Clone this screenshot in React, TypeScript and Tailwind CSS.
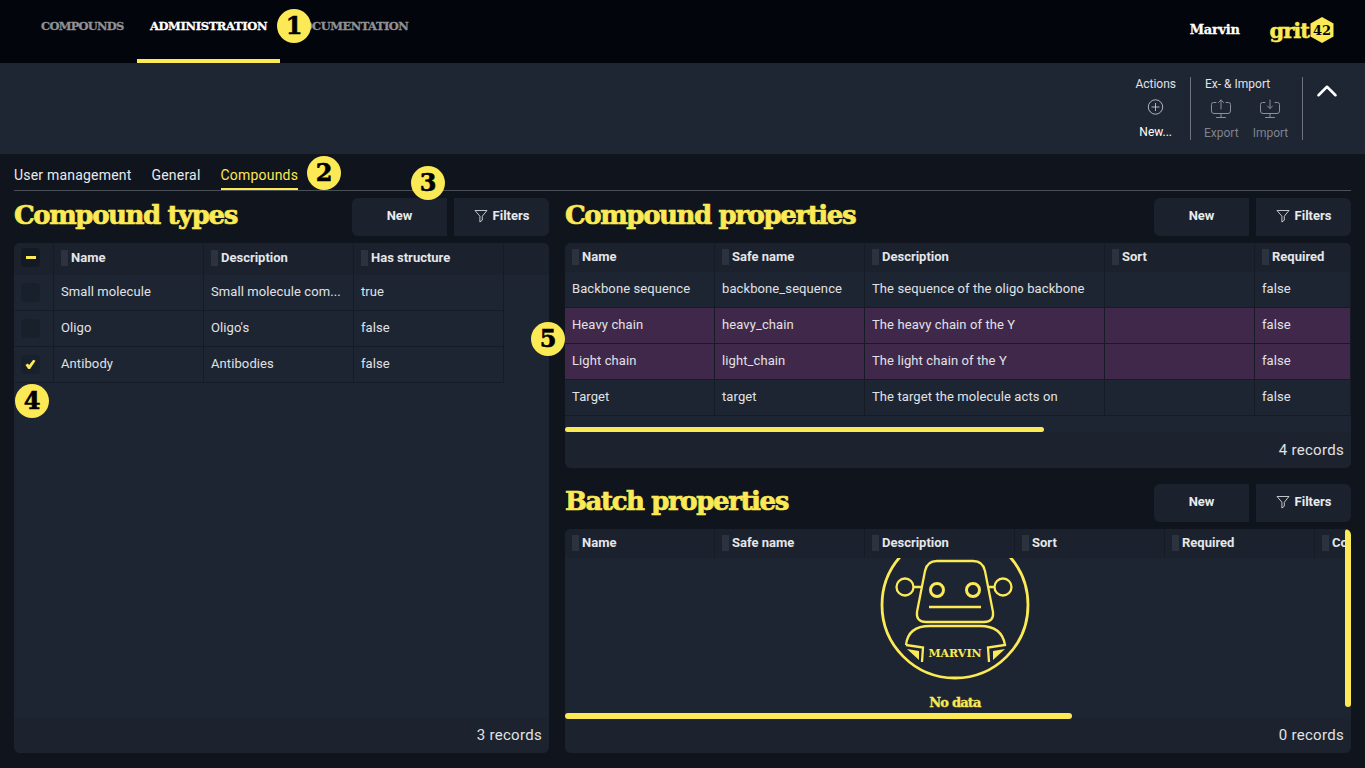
import { ChevronUp } from "lucide-react";

const yellow = "#fbe955";

type Col = { title: string; width: string };
type Row = { cells: string[]; highlighted?: boolean; check?: boolean };

function Badge({ n, className }: { n: number; className: string }) {
  return (
    <div
      className={`absolute flex h-[34px] w-[34px] items-center justify-center rounded-full bg-[#fbe955] font-['DejaVu_Serif',serif] text-[24px] font-bold text-black [-webkit-text-stroke-width:0.6px] ${className}`}
    >
      {n}
    </div>
  );
}

function FilterIcon() {
  return (
    <svg viewBox="0 0 14 14" className="h-[14px] w-[14px]" fill="none" stroke="#d5d8de" strokeWidth="0.9">
      <path d="M1 1.500h12L8.300 7.200v4L5.900 13V7.200z" strokeLinejoin="round" />
    </svg>
  );
}

function MonitorIcon({ up }: { up?: boolean }) {
  return (
    <svg viewBox="0 0 22 20" className="h-[20px] w-[22px]" fill="none" stroke="#8a8f98" strokeWidth="1" strokeLinecap="round">
      <path d="M6 3.500H3.500a2 2 0 0 0-2 2V12a2.500 2.500 0 0 0 2.500 2.500h14a2.500 2.500 0 0 0 2.500-2.500V5.500a2 2 0 0 0-2-2H16" />
      <path d="M11 14.500v3.500M6.500 18.500h9" />
      {up ? <path d="M11 10V1M8.500 3.500 11 1l2.500 2.500" /> : <path d="M11 1v8.500M8.500 7 11 9.500 13.500 7" />}
    </svg>
  );
}

function SectionHeader({ title }: { title: string }) {
  return (
    <div className="flex h-[38px] items-center justify-between">
      <h2 className="pb-[4px] font-['DejaVu_Serif',serif] text-[26px] font-bold tracking-[-1.4px] text-[#fbe955] [-webkit-text-stroke-width:0.7px]">
        {title}
      </h2>
      <div className="flex gap-[7px]">
        <button className="flex h-[38px] w-[95px] items-center justify-center rounded-l-md bg-[#1b222d] pb-[3px] text-[13px] font-bold text-[#e8eaee]">
          New
        </button>
        <button className="flex h-[38px] w-[95px] items-center justify-center gap-[5px] rounded-r-md bg-[#1b222d] pb-[3px] text-[13px] font-bold text-[#e8eaee]">
          <FilterIcon />
          Filters
        </button>
      </div>
    </div>
  );
}

function HeaderCell({ col, tall }: { col: Col; tall?: boolean }) {
  return (
    <div
      className={`flex h-full shrink-0 items-center gap-[3px] overflow-hidden border-r border-[#161c26] pl-[7px] ${tall ? "pb-[3px]" : "pb-px"} ${col.width}`}
    >
      <span className="h-[16px] w-[7px] shrink-0 bg-[#2c333f]" />
      <span className="whitespace-nowrap text-[13px] font-bold text-[#e4e6ea]">{col.title}</span>
    </div>
  );
}

function DataTable({ columns, rows, withCheck }: { columns: Col[]; rows: Row[]; withCheck?: boolean }) {
  return (
    <>
      <div className={`flex shrink-0 bg-[#1b222d] ${withCheck ? "h-[32px]" : "h-[29px]"}`}>
        {withCheck && (
          <div className="flex h-full w-[40px] shrink-0 items-center border-r border-[#161c26] pb-[3px] pl-[7px]">
            <span className="flex h-[19px] w-[19px] items-center justify-center rounded-sm bg-[#141a23]">
              <span className="h-[3px] w-[10px] bg-[#fbe955]" />
            </span>
          </div>
        )}
        {columns.map((col) => (
          <HeaderCell key={col.title} col={col} tall={withCheck} />
        ))}
      </div>
      {rows.map((row) => (
        <div key={row.cells[0]} className={`flex h-[36px] w-fit shrink-0 border-b border-[#161c26] ${row.highlighted ? "bg-[#40284a]" : ""}`}>
          {withCheck && (
            <div className="flex h-full w-[40px] shrink-0 items-center border-r border-[#161c26] pl-[7px]">
              <span className="flex h-[19px] w-[19px] items-center justify-center rounded-sm bg-[#18202b]">
                {row.check && (
                  <svg viewBox="0 0 12 12" className="h-[11px] w-[11px]" fill={yellow}>
                    <path d="M0.500 6.500 3 5 4.500 6.500 9 0.800 11.500 2 5.500 11H3.500z" />
                  </svg>
                )}
              </span>
            </div>
          )}
          {row.cells.map((cell, i) => (
            <div
              key={i}
              className={`flex h-full shrink-0 items-center overflow-hidden whitespace-nowrap border-r border-[#161c26] pb-[2px] pl-[7px] text-[13px] tracking-[0.1px] text-[#e0e2e6] ${columns[i].width}`}
            >
              {cell}
            </div>
          ))}
        </div>
      ))}
    </>
  );
}

function Footer({ text }: { text: string }) {
  return (
    <div className="flex h-[36px] shrink-0 items-center justify-end rounded-b-md bg-[#1c232e] pr-[7px] text-[15px] tracking-[0.3px] text-[#e0e2e6]">
      {text}
    </div>
  );
}

function MarvinLogo() {
  return (
    <svg viewBox="0 0 150 156" className="h-[156px] w-[150px] shrink-0" fill="none" stroke={yellow} strokeWidth="2.300">
      <circle cx="75" cy="47" r="73" strokeWidth="2.800" />
      <path d="M45 13Q47 3 57 3H93Q103 3 105 13L113 54Q114 64 104 64H46Q36 64 37 54Z" />
      <circle cx="57" cy="32" r="6.500" strokeWidth="3" />
      <circle cx="93" cy="32" r="6.500" strokeWidth="3" />
      <circle cx="25" cy="29" r="8.500" />
      <circle cx="123" cy="29" r="8.500" />
      <path d="M33.500 29H41M109 29h5.500M49 49h52" />
      <path d="M26 87Q28 68 50 68H100Q122 68 125 87L108 89.500 109 104M26 87l17 2.500-1 14.500" />
      <path d="M27 91l12 2v9z" fill={yellow} stroke="none" />
      <path d="M125 91l-12 2v9z" fill={yellow} stroke="none" />
      <text x="75" y="99" textAnchor="middle" fill={yellow} stroke="none" fontSize="11" fontWeight="700" fontFamily="'DejaVu Serif', serif">
        MARVIN
      </text>
    </svg>
  );
}

const typeColumns: Col[] = [
  { title: "Name", width: "w-[150px]" },
  { title: "Description", width: "w-[150px]" },
  { title: "Has structure", width: "w-[150px]" },
];

const typeRows: Row[] = [
  { cells: ["Small molecule", "Small molecule com...", "true"] },
  { cells: ["Oligo", "Oligo's", "false"] },
  { cells: ["Antibody", "Antibodies", "false"], check: true },
];

const propertyColumns: Col[] = [
  { title: "Name", width: "w-[150px]" },
  { title: "Safe name", width: "w-[150px]" },
  { title: "Description", width: "w-[240px]" },
  { title: "Sort", width: "w-[150px]" },
  { title: "Required", width: "w-[96px]" },
];

const propertyRows: Row[] = [
  { cells: ["Backbone sequence", "backbone_sequence", "The sequence of the oligo backbone", "", "false"] },
  { cells: ["Heavy chain", "heavy_chain", "The heavy chain of the Y", "", "false"], highlighted: true },
  { cells: ["Light chain", "light_chain", "The light chain of the Y", "", "false"], highlighted: true },
  { cells: ["Target", "target", "The target the molecule acts on", "", "false"] },
];

const batchColumns: Col[] = [
  { title: "Name", width: "w-[150px]" },
  { title: "Safe name", width: "w-[150px]" },
  { title: "Description", width: "w-[150px]" },
  { title: "Sort", width: "w-[150px]" },
  { title: "Required", width: "w-[150px]" },
  { title: "Compound", width: "w-[36px]" },
];

export default function App() {
  return (
    <div className="relative h-[768px] w-[1365px] overflow-hidden bg-[#10141c] font-['Roboto',sans-serif] text-[#e0e2e6]">
      <header className="flex h-[63px] items-start justify-between bg-[#03050c]">
        <nav className="flex pl-[28px] font-['DejaVu_Serif',serif] text-[11.5px] font-bold [-webkit-text-stroke-width:0.3px]">
          <a className="flex h-[63px] w-[109px] items-start pl-[13px] pt-[18px] tracking-[-0.75px] text-[#8f9196]">COMPOUNDS</a>
          <a className="flex h-[63px] w-[143px] items-start justify-center border-b-[4px] border-[#fbe955] pt-[18px] tracking-[-0.35px] text-white">
            ADMINISTRATION
          </a>
          <a className="flex h-[63px] items-start pl-[13px] pt-[18px] tracking-[-0.5px] text-[#8f9196]">DOCUMENTATION</a>
        </nav>
        <div className="flex items-center pr-[31px] pt-[17px]">
          <span className="mr-[30px] font-['DejaVu_Serif',serif] text-[13px] font-bold tracking-[-0.3px] text-white [-webkit-text-stroke-width:0.3px]">
            Marvin
          </span>
          <span className="font-['DejaVu_Serif',serif] text-[21px] font-bold leading-none tracking-[-1px] text-[#fbe955] [-webkit-text-stroke-width:0.5px]">
            grit
          </span>
          <svg viewBox="0 0 24 26" className="ml-px h-[26px] w-[24px]">
            <path d="M12 0 23.500 6.500v13L12 26 .5 19.500v-13z" fill={yellow} />
            <text x="12" y="18" textAnchor="middle" fontSize="13" fontWeight="700" fontFamily="'DejaVu Serif', serif" fill="#03050c">
              42
            </text>
          </svg>
        </div>
      </header>

      <div className="flex h-[91px] justify-end bg-[#1e2533] pt-[14px]">
        <div className="flex h-[63px] flex-col items-center pr-[14px] text-[12px]">
          <span className="leading-[15px] text-[#e0e2e6]">Actions</span>
          <svg viewBox="0 0 20 20" className="mt-[7px] h-[19px] w-[19px]" fill="none" stroke="#d5d8de" strokeWidth="1">
            <circle cx="10" cy="10" r="9" />
            <path d="M10 5v10M5 10h10" />
          </svg>
          <span className="mt-[10px] leading-[15px] text-white">New...</span>
        </div>
        <div className="flex h-[63px] w-[113px] flex-col items-start border-x border-[#6d727c] pl-[13px] text-[12px]">
          <span className="pl-px leading-[15px] text-[#e0e2e6]">Ex- & Import</span>
          <div className="mt-[7px] flex gap-[14px]">
            <div className="flex flex-col items-center text-[#7e838c]">
              <MonitorIcon up />
              <span className="mt-[7px] leading-[15px]">Export</span>
            </div>
            <div className="flex flex-col items-center text-[#7e838c]">
              <MonitorIcon />
              <span className="mt-[7px] leading-[15px]">Import</span>
            </div>
          </div>
        </div>
        <div className="-mt-[3px] w-[62px] pl-[7px]">
          <ChevronUp className="h-[34px] w-[34px] text-white" strokeWidth={1.8} />
        </div>
      </div>

      <main className="px-[14px]">
        <div className="mb-[7px] flex h-[37px] items-end gap-[20px] border-b border-[#4a4f58] text-sm tracking-[0.2px]">
          <span className="pb-[5px] text-[#e8eaee]">User management</span>
          <span className="pb-[5px] text-[#e8eaee]">General</span>
          <span className="border-b-2 border-[#fbe955] pb-[3px] text-[#fbe955]">Compounds</span>
        </div>

        <div className="grid grid-cols-[535px_786px] gap-x-[16px]">
          <section className="flex h-[555px] flex-col">
            <SectionHeader title="Compound types" />
            <div className="mt-[7px] flex h-[510px] flex-col overflow-hidden rounded-md bg-[#1e2532]">
              <DataTable columns={typeColumns} rows={typeRows} withCheck />
              <div className="grow" />
              <Footer text="3 records" />
            </div>
          </section>

          <section className="flex h-[555px] flex-col">
            <SectionHeader title="Compound properties" />
            <div className="mt-[7px] flex h-[225px] flex-col overflow-hidden rounded-md bg-[#1e2532]">
              <DataTable columns={propertyColumns} rows={propertyRows} />
              <div className="grow" />
              <div className="h-[5px] w-[479px] shrink-0 rounded-full bg-[#fbe955]" />
              <Footer text="4 records" />
            </div>

            <div className="mt-[16px]">
              <SectionHeader title="Batch properties" />
            </div>
            <div className="relative mt-[7px] flex h-[224px] flex-col overflow-hidden rounded-md bg-[#1e2532]">
              <DataTable columns={batchColumns} rows={[]} />
              <div className="relative flex min-h-0 grow flex-col items-center overflow-hidden pr-[6px]">
                <MarvinLogo />
              </div>
              <div className="absolute bottom-[42px] left-0 right-[6px] text-center font-['DejaVu_Serif',serif] text-[13px] font-bold leading-[16px] tracking-[-0.8px] text-[#fbe955] [-webkit-text-stroke-width:0.3px]">
                No data
              </div>
              <div className="absolute bottom-[34px] left-0 h-[6px] w-[507px] rounded-full bg-[#fbe955]" />
              <div className="absolute right-0 top-0 h-[178px] w-[6px] rounded-full bg-[#fbe955]" />
              <Footer text="0 records" />
            </div>
          </section>
        </div>
      </main>

      <Badge n={1} className="left-[277px] top-[9px]" />
      <Badge n={2} className="left-[307px] top-[156px]" />
      <Badge n={3} className="left-[411px] top-[166px]" />
      <Badge n={4} className="left-[15px] top-[384px]" />
      <Badge n={5} className="left-[531px] top-[322px]" />
    </div>
  );
}
